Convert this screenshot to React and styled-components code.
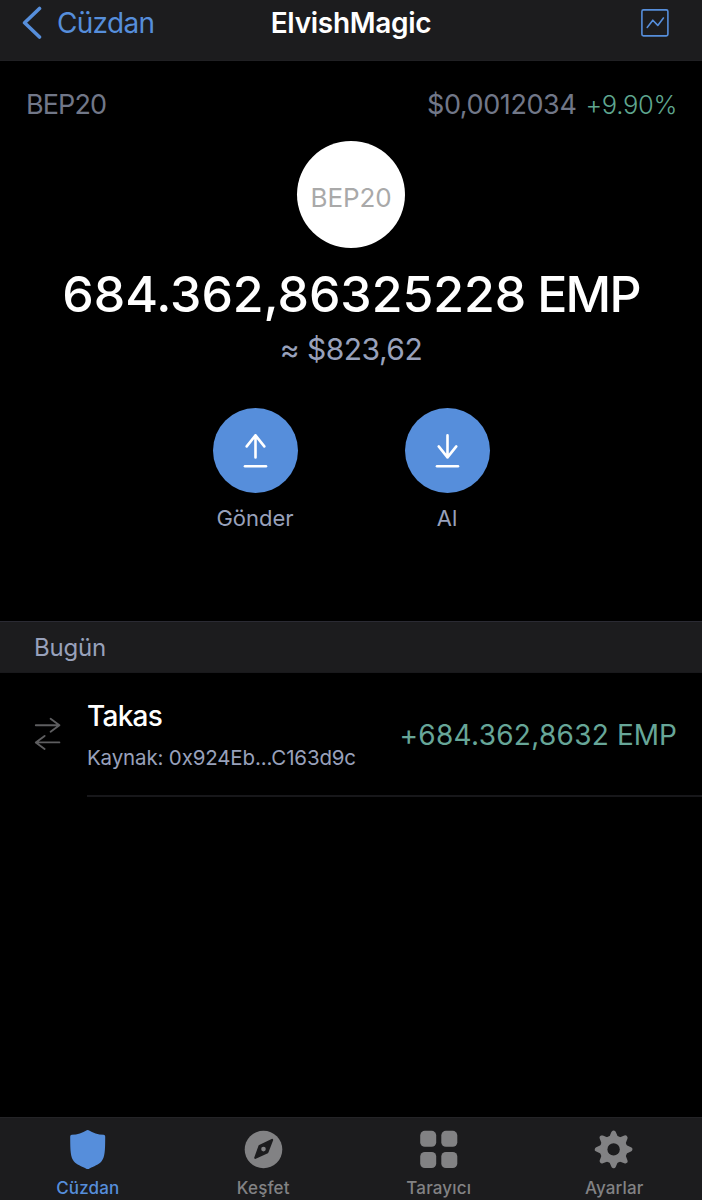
import React from "react";
import styled, { createGlobalStyle } from "styled-components";

const Global = createGlobalStyle`
  * { box-sizing: border-box; }
  body { margin: 0; background: #000; }
`;

const Screen = styled.div`
  width: 702px;
  height: 1200px;
  display: flex;
  flex-direction: column;
  overflow: hidden;
  background: #000;
  color: #fff;
  font-family: Inter, "Noto Sans", sans-serif;
  white-space: nowrap;
`;

const NavBar = styled.header`
  flex: none;
  height: 61px;
  padding: 0 22px 14px;
  display: grid;
  grid-template-columns: 1fr auto 1fr;
  align-items: center;
  background: #1c1c1e;
  border-bottom: 1px solid #202023;
`;

const BackLink = styled.div`
  display: flex;
  align-items: center;
  gap: 14px;
  color: #568edb;
  font-size: 28px;
  line-height: 34px;
  letter-spacing: -0.7px;
`;

const Title = styled.h1`
  margin: 0;
  font-size: 28px;
  line-height: 34px;
  font-weight: 600;
  letter-spacing: -0.3px;
`;

const NavAction = styled.div`
  padding-right: 11px;
  display: flex;
  justify-content: flex-end;
`;

const TokenPanel = styled.section`
  flex: none;
  height: 560px;
  display: flex;
  flex-direction: column;
  align-items: center;
`;

const MetaRow = styled.div`
  width: 100%;
  height: 80px;
  padding: 27px 25px 0 26px;
  display: flex;
  justify-content: space-between;
  color: #717788;
  font-size: 27px;
  line-height: 34px;
`;

const TokenType = styled.span`
  letter-spacing: -0.9px;
`;

const Price = styled.span`
  letter-spacing: -0.4px;
`;

const Change = styled.span`
  margin-left: 9px;
  color: #5fa68f;
  font-size: 25.5px;
  font-weight: 300;
  letter-spacing: -0.3px;
`;

const TokenLogo = styled.div`
  width: 108px;
  height: 107px;
  padding-top: 6px;
  display: flex;
  align-items: center;
  justify-content: center;
  border-radius: 50%;
  background: #fff;
  color: #a9a9a9;
  font-size: 26px;
  letter-spacing: -0.1px;
`;

const Balance = styled.div`
  margin-top: 16px;
  display: flex;
  gap: 11px;
  font-size: 50px;
  line-height: 60px;
  font-weight: 500;
  letter-spacing: -0.05px;
`;

const BalanceUnit = styled.span`
  letter-spacing: -1.8px;
`;

const Fiat = styled.div`
  margin-top: 7px;
  color: #98a1bb;
  font-size: 30px;
  line-height: 36px;
  letter-spacing: -0.5px;
`;

const Actions = styled.div`
  margin-top: 41px;
  display: flex;
  gap: 107px;
`;

const Action = styled.div`
  width: 85px;
  display: flex;
  flex-direction: column;
  align-items: center;
  gap: 11px;
  color: #98a1bb;
  font-size: 22px;
  line-height: 28px;
`;

const ActionCircle = styled.div`
  width: 85px;
  height: 85px;
  display: flex;
  align-items: center;
  justify-content: center;
  border-radius: 50%;
  background: #568edb;
`;

const DateHeader = styled.div`
  flex: none;
  height: 52px;
  padding-left: 34px;
  display: flex;
  align-items: center;
  background: #1c1c1e;
  border-top: 1px solid #2a2a33;
  border-bottom: 1px solid #19191c;
  color: #98a1bb;
  font-size: 24px;
  letter-spacing: -0.2px;
`;

const Transaction = styled.div`
  flex: none;
  height: 124px;
  padding-left: 34px;
  display: flex;
`;

const TransactionIcon = styled.div`
  width: 53px;
  padding-top: 44px;
`;

const TransactionBody = styled.div`
  flex: 1;
  padding-right: 25px;
  display: flex;
  justify-content: space-between;
  border-bottom: 2px solid #17171a;
`;

const TransactionTitle = styled.div`
  margin-top: 26px;
  font-size: 28px;
  line-height: 34px;
  font-weight: 500;
  letter-spacing: -0.75px;
`;

const TransactionSource = styled.div`
  margin-top: 12px;
  color: #98a1bb;
  font-size: 20.5px;
  line-height: 26px;
  letter-spacing: -0.15px;
`;

const Amount = styled.div`
  margin-top: 45px;
  color: #67a698;
  font-size: 28px;
  line-height: 34px;
`;

const AmountValue = styled.span`
  letter-spacing: 0.28px;
`;

const TabBar = styled.nav`
  flex: none;
  height: 83px;
  margin-top: auto;
  display: grid;
  grid-template-columns: repeat(4, 1fr);
  background: #1c1c1e;
  border-top: 1px solid #242427;
`;

const Tab = styled.div`
  padding-top: 11px;
  display: flex;
  flex-direction: column;
  align-items: center;
  gap: 8px;
  color: ${(p) => (p.$active ? "#568edb" : "#828284")};
  font-size: 17px;
  line-height: 22px;
  font-weight: 450;
  letter-spacing: 0.15px;
`;

const BackIcon = () => (
  <svg width="21" height="34" viewBox="0 0 21 34" fill="none" stroke="#568edb" strokeWidth="3.6" strokeLinecap="round" strokeLinejoin="round">
    <path d="M17.5 2.5 2.6 16.8 17.5 31" />
  </svg>
);

const ChartIcon = () => (
  <svg width="28" height="28" viewBox="0 0 28 28" fill="none" stroke="#568edb" strokeWidth="1.6" strokeLinecap="round" strokeLinejoin="round">
    <rect x="0.9" y="0.9" width="26" height="26" rx="1.6" />
    <path d="m6.2 18.4 5.6-7.2 5 5.2 5.6-7.4" />
  </svg>
);

const ArrowIcon = ({ down }) => (
  <svg width="27" height="36" viewBox="0 0 27 36" fill="none" stroke="#fff" strokeWidth="2.6" strokeLinecap="round" strokeLinejoin="round">
    <path d={down ? "M13.5 2.4v22M4.7 13.4l8.8 11 8.8-11" : "M13.5 24.4v-22M4.7 13.4l8.8-11 8.8 11"} />
    <path d="M3 33.2h21" />
  </svg>
);

const SwapIcon = () => (
  <svg width="28" height="34" viewBox="0 0 28 34" fill="none" stroke="#5e5e60" strokeWidth="1.9" strokeLinecap="round" strokeLinejoin="round">
    <path d="M1.8 8.3h23.6M16.6 1.8l8.8 6.5-8.8 6.5" />
    <path d="M25.4 25.4H1.8M10.600 18.9l-8.8 6.5 8.8 6.5" />
  </svg>
);

const ShieldIcon = () => (
  <svg width="40" height="40" viewBox="0 0 40 40" fill="currentColor">
    <path d="M18.8 1.2q.9-.6 1.8 0c4.3 2.7 9.3 4.3 15 4.6q1.6.1 1.6 1.7c0 15-.4 20.4-3.6 24.8-2.7 3.5-7.9 5-12.5 7.4q-1.4.8-2.8 0c-4.6-2.4-9.8-3.9-12.5-7.4-3.2-4.4-3.6-9.8-3.6-24.8q0-1.6 1.6-1.7c5.7-.3 10.7-1.9 15-4.6Z" />
  </svg>
);

const CompassIcon = () => (
  <svg width="40" height="40" viewBox="0 0 40 40">
    <circle cx="20.5" cy="20.5" r="18.8" fill="currentColor" />
    <path d="m12.3 28.8 4.3-11.9 12.5-6-4.7 12.3Z" fill="#1c1c1e" stroke="#1c1c1e" strokeWidth="2.2" strokeLinejoin="round" />
    <circle cx="20.5" cy="20.1" r="2.3" fill="currentColor" />
  </svg>
);

const GridIcon = () => (
  <svg width="40" height="40" viewBox="0 0 40 40" fill="currentColor">
    <rect x="1.2" y="1.8" width="16" height="16" rx="4.6" />
    <rect x="22.3" y="1.8" width="16" height="16" rx="4.6" />
    <rect x="1.2" y="23" width="16" height="16" rx="4.6" />
    <rect x="22.3" y="23" width="16" height="16" rx="4.6" />
  </svg>
);

const GearIcon = () => (
  <svg width="40" height="40" viewBox="0 0 40 40" fill="currentColor">
    <g transform="translate(19.6 20.4)">
      <circle r="13.8" />
      {[0, 45, 90, 135, 180, 225, 270, 315].map((angle) => (
        <path key={angle} d="M0-16.4 2.6-10.5h-5.2Z" stroke="currentColor" strokeWidth="4.8" strokeLinejoin="round" transform={`rotate(${angle})`} />
      ))}
      <circle r="6.2" fill="#1c1c1e" />
    </g>
  </svg>
);

export default function App() {
  return (
    <Screen>
      <Global />
      <NavBar>
        <BackLink>
          <BackIcon />
          Cüzdan
        </BackLink>
        <Title>ElvishMagic</Title>
        <NavAction>
          <ChartIcon />
        </NavAction>
      </NavBar>

      <TokenPanel>
        <MetaRow>
          <TokenType>BEP20</TokenType>
          <Price>
            $0,0012034<Change>+9.90%</Change>
          </Price>
        </MetaRow>
        <TokenLogo>BEP20</TokenLogo>
        <Balance>
          <span>684.362,86325228</span>
          <BalanceUnit>EMP</BalanceUnit>
        </Balance>
        <Fiat>≈ $823,62</Fiat>
        <Actions>
          <Action>
            <ActionCircle>
              <ArrowIcon />
            </ActionCircle>
            Gönder
          </Action>
          <Action>
            <ActionCircle>
              <ArrowIcon down />
            </ActionCircle>
            Al
          </Action>
        </Actions>
      </TokenPanel>

      <DateHeader>Bugün</DateHeader>
      <Transaction>
        <TransactionIcon>
          <SwapIcon />
        </TransactionIcon>
        <TransactionBody>
          <div>
            <TransactionTitle>Takas</TransactionTitle>
            <TransactionSource>Kaynak: 0x924Eb...C163d9c</TransactionSource>
          </div>
          <Amount>
            <AmountValue>+684.362,8632</AmountValue> EMP
          </Amount>
        </TransactionBody>
      </Transaction>

      <TabBar>
        <Tab $active>
          <ShieldIcon />
          Cüzdan
        </Tab>
        <Tab>
          <CompassIcon />
          Keşfet
        </Tab>
        <Tab>
          <GridIcon />
          Tarayıcı
        </Tab>
        <Tab>
          <GearIcon />
          Ayarlar
        </Tab>
      </TabBar>
    </Screen>
  );
}
